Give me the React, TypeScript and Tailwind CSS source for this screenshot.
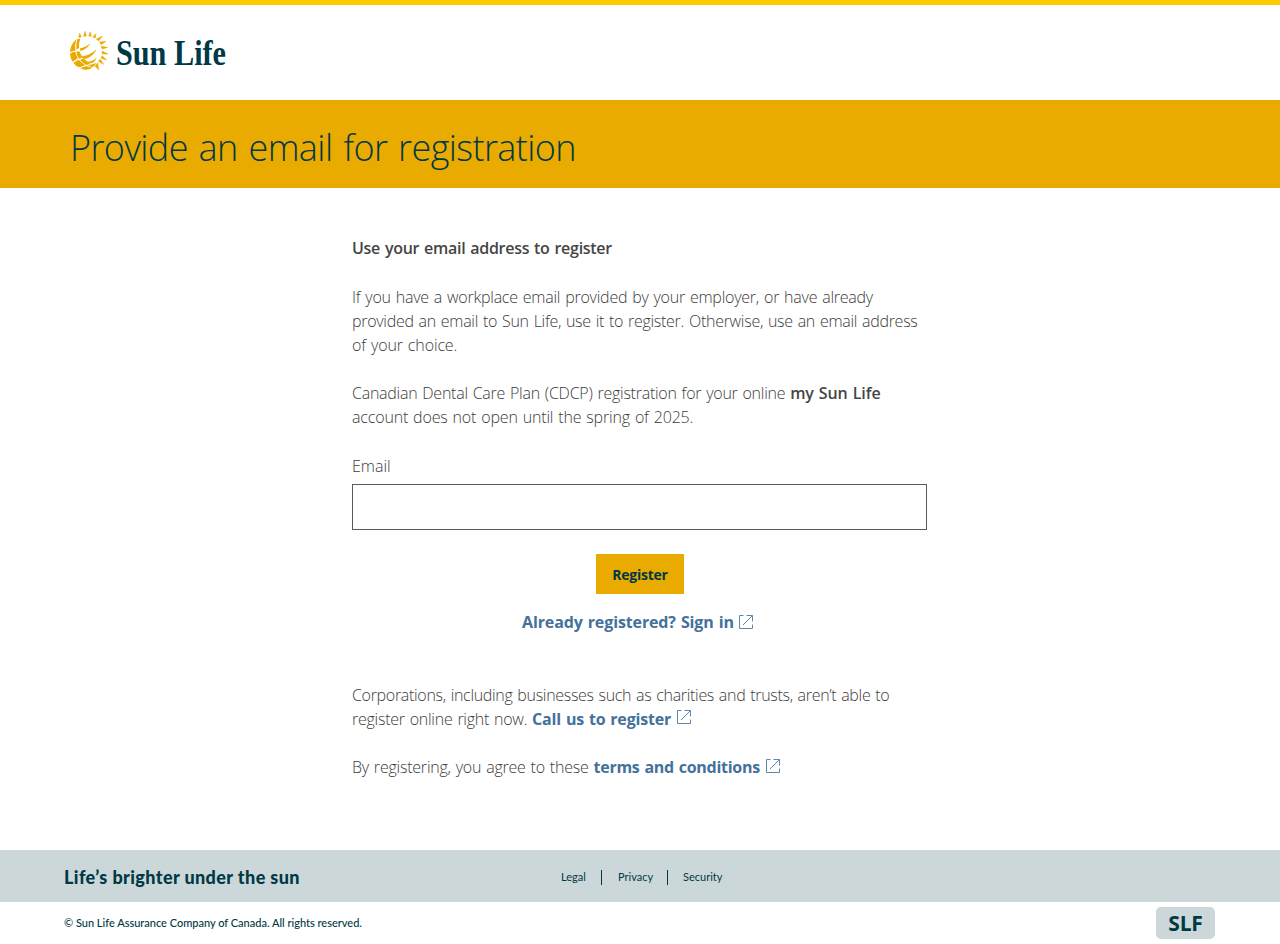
import React from "react";

const SunLogo = () => (
  <div className="flex items-center">
    <svg viewBox="27 27 123 123" className="h-[41px] w-[41px]" fill="#eaab00">
      {/* Globe */}
      <path d="M49 55 Q31 70 30 94 Q37 90 46 89 Q44 70 49 55Z" />
      <path d="M52 54 L61 53 Q56 65 57 80 Q52 84 49 87 Q47 68 52 54Z" />
      <path d="M60 82 Q75 80 91 67 Q81 86 61 90Z" />
      <path d="M30 98 Q39 91 46 92 Q48 103 54 112 Q46 118 38 122 Q30 111 30 98Z" />
      <path d="M49 92 Q54 90 59 92 Q62 102 69 109 Q64 112 57 113 Q50 103 49 92Z" />
      <path d="M63 107 Q90 104 110 84 Q99 109 72 115Z" />
      <path d="M40 125 Q48 121 56 116 Q64 125 76 132 Q69 136 57 139 Q47 135 40 125Z" />
      <path d="M60 116 Q66 113 71 113 Q80 122 92 126 Q88 131 80 132 Q67 126 60 116Z" />
      <path d="M84 121 Q99 121 110 110 Q104 124 94 127Z" />
      <path d="M60 141 Q70 140 79 135 Q88 139 98 139 Q80 153 60 141Z" />
      <path d="M84 133 Q98 130 108 126 Q106 134 99 138 Q90 138 84 133Z" />
      {/* Rays */}
      <path
        stroke="#eaab00"
        strokeWidth="1.5"
        d="M59 37 L56 49 L64 48Z M75 31 L71 46 L79 45Z M91 32 L86 45 L94 46Z M108 38 L98 48 L106 51Z M127 46 L109 54 L116 60Z M138 61 L119 63 L123 71Z M143 79 L123 76 L127 84Z M144 99 L126 90 L127 99Z M140 117 L126 104 L123 112Z M131 130 L121 115 L115 121Z M116 147 L113 125 L105 135Z"
      />
    </svg>
    <svg viewBox="0 0 116 44" className="ml-[5px] h-[44px] w-[116px] overflow-visible">
      <text
        x="1"
        y="36.5"
        textLength="110"
        lengthAdjust="spacingAndGlyphs"
        fill="#003946"
        className="font-['Liberation_Serif',serif] text-[35px] font-bold"
      >
        Sun Life
      </text>
    </svg>
  </div>
);

const ExternalIcon = ({ className = "" }: { className?: string }) => (
  <svg
    viewBox="0 0 14 14"
    className={`inline-block h-[14px] w-[14px] ${className}`}
    fill="none"
    stroke="#5f87ad"
    strokeWidth="1"
  >
    <path d="M4.5 .5H.5V13.5H13.5V9.5M7.5 .5H13.5V6.5M13.5 .5L4 10" />
  </svg>
);

const App = () => {
  return (
    <div className="flex h-[944px] flex-col bg-white font-['Open_Sans',sans-serif] text-[#3c3c3c]">
      {/* Header */}
      <header className="flex h-[100px] items-center border-t-[5px] border-[#ffcb05] pb-[5px] pl-[69px]">
        <SunLogo />
      </header>

      {/* Title */}
      <div className="flex h-[88px] items-center bg-[#eaab00] pl-[70px] pt-[7px]">
        <h1 className="whitespace-nowrap text-[36px] font-light tracking-[-0.6px] text-[#003946] [word-spacing:2px]">
          Provide an email for registration
        </h1>
      </div>

      <main className="mx-auto flex w-[576px] flex-1 flex-col whitespace-nowrap pt-[48px] text-base font-light leading-6 tracking-[-0.25px] [word-spacing:1px]">
        <h2 className="font-semibold tracking-[-0.28px] text-[#454545]">Use your email address to register</h2>

        <p className="mt-[25px]">
          <span className="tracking-[-0.23px]">
            If you have a workplace email provided by your employer, or have already
          </span>
          <br />
          <span className="tracking-[-0.28px]">
            provided an email to Sun Life, use it to register. Otherwise, use an email address
          </span>
          <br />
          <span className="tracking-[-0.13px]">of your choice.</span>
        </p>
        <p className="mt-6">
          Canadian Dental Care Plan (CDCP) registration for your online{" "}
          <b className="font-semibold tracking-[-0.1px] text-[#454545]">my Sun Life</b>
          <br />
          <span className="tracking-[-0.17px]">account does not open until the spring of 2025.</span>
        </p>

        <label className="mt-[25px] tracking-normal" htmlFor="email">
          Email
        </label>
        <input
          id="email"
          type="text"
          className="mt-[6px] h-[46px] w-[575px] border border-[#5b5b5b] bg-white px-3"
        />

        <button className="mt-6 h-10 w-[88px] self-center bg-[#eaab00] pt-px text-sm font-bold text-[#003946]">
          Register
        </button>
        <a className="mt-4 flex items-center pl-[170px] font-bold tracking-[-0.12px] text-[#44719b]">
          Already registered? Sign in
          <ExternalIcon className="ml-[5px]" />
        </a>

        <p className="mt-[49px]">
          <span className="tracking-[-0.31px]">
            Corporations, including businesses such as charities and trusts, aren’t able to
          </span>
          <br />
          register online right now.{" "}
          <a className="font-bold tracking-[-0.2px] text-[#44719b]">Call us to register</a>
          <ExternalIcon className="relative -top-[4px] ml-[6px]" />
        </p>
        <p className="mt-6">
          <span className="tracking-[-0.22px]">By registering, you agree to these </span>
          <a className="font-bold tracking-[-0.27px] text-[#44719b]">terms and conditions</a>
          <ExternalIcon className="relative -top-[3px] ml-[6px]" />
        </p>
      </main>

      {/* Footer */}
      <footer className="whitespace-nowrap font-['Lato',sans-serif] text-[#003946]">
        <div className="flex h-[52px] items-center bg-[#ccd7d9] pl-16 pt-[2px]">
          <div className="w-[497px] text-lg font-black tracking-[0.4px]">Life’s brighter under the sun</div>
          <div className="flex items-center text-[11px]">
            <span className="w-[40px]">Legal</span>
            <span className="h-[15px] w-px bg-[#003946]" />
            <span className="w-[65px] pl-[16px]">Privacy</span>
            <span className="h-[15px] w-px bg-[#003946]" />
            <span className="pl-[15px]">Security</span>
          </div>
        </div>
        <div className="flex h-[42px] items-center justify-between pl-16 pr-[65px]">
          <span className="text-[11px] font-medium">
            © Sun Life Assurance Company of Canada. All rights reserved.
          </span>
          <span className="flex h-8 w-[59px] items-center justify-center rounded-[5px] bg-[#ccd7d9] pt-px font-['Open_Sans',sans-serif] text-[21px] font-bold tracking-[-0.2px]">
            SLF
          </span>
        </div>
      </footer>
    </div>
  );
};

export default App;
